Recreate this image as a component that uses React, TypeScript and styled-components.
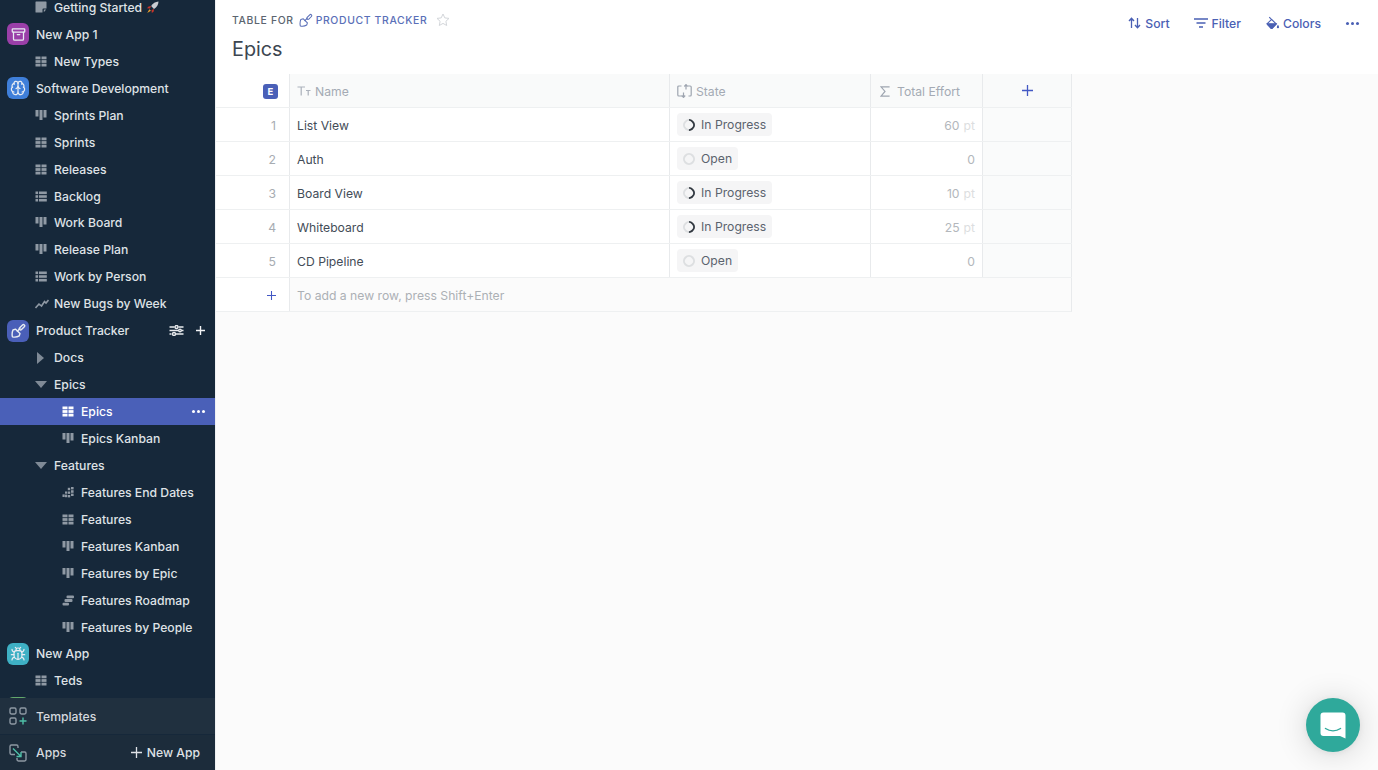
import React from "react";
import styled, { createGlobalStyle } from "styled-components";
import { Archive, Brain, Bug } from "lucide-react";

const GlobalStyle = createGlobalStyle`
    html, body {
        margin: 0;
        padding: 0;
        height: 100%;
        overflow: hidden;
        background: #fff;
        font-family: Inter, "Liberation Sans", sans-serif;
        -webkit-font-smoothing: antialiased;
    }
`;

type ViewKind = "sheet" | "grid" | "kanban" | "list" | "chart" | "dots" | "roadmap";

interface ISideItem {
    label?: string;
    level: 0 | 1 | 2;
    view?: ViewKind;
    caret?: "right" | "down";
    app?: "archive" | "brain" | "trowel" | "bug" | "green";
}

const SIDE_ITEMS: ISideItem[] = [
    { label: "Getting Started", level: 1, view: "sheet" },
    { label: "New App 1", level: 0, app: "archive" },
    { label: "New Types", level: 1, view: "grid" },
    { label: "Software Development", level: 0, app: "brain" },
    { label: "Sprints Plan", level: 1, view: "kanban" },
    { label: "Sprints", level: 1, view: "grid" },
    { label: "Releases", level: 1, view: "grid" },
    { label: "Backlog", level: 1, view: "list" },
    { label: "Work Board", level: 1, view: "kanban" },
    { label: "Release Plan", level: 1, view: "kanban" },
    { label: "Work by Person", level: 1, view: "list" },
    { label: "New Bugs by Week", level: 1, view: "chart" },
    { label: "Product Tracker", level: 0, app: "trowel" },
    { label: "Docs", level: 1, caret: "right" },
    { label: "Epics", level: 1, caret: "down" },
    { label: "Epics", level: 2, view: "grid" },
    { label: "Epics Kanban", level: 2, view: "kanban" },
    { label: "Features", level: 1, caret: "down" },
    { label: "Features End Dates", level: 2, view: "dots" },
    { label: "Features", level: 2, view: "grid" },
    { label: "Features Kanban", level: 2, view: "kanban" },
    { label: "Features by Epic", level: 2, view: "kanban" },
    { label: "Features Roadmap", level: 2, view: "roadmap" },
    { label: "Features by People", level: 2, view: "kanban" },
    { label: "New App", level: 0, app: "bug" },
    { label: "Teds", level: 1, view: "grid" },
    { level: 0, app: "green" },
];

const ROWS = [
    { id: 1, name: "List View", state: "In Progress", effort: "60", unit: true },
    { id: 2, name: "Auth", state: "Open", effort: "0", unit: false },
    { id: 3, name: "Board View", state: "In Progress", effort: "10", unit: true },
    { id: 4, name: "Whiteboard", state: "In Progress", effort: "25", unit: true },
    { id: 5, name: "CD Pipeline", state: "Open", effort: "0", unit: false },
];

const APP_COLORS: Record<string, string> = {
    archive: "#9a3fa8",
    brain: "#3f7fd9",
    trowel: "#4a5fb8",
    bug: "#3eb0c4",
    green: "#63a86c",
};

const ViewIcon = ({ kind }: { kind: ViewKind }) => {
    if (kind === "sheet") {
        return (
            <svg width="12" height="12" viewBox="0 0 12 12" fill="currentColor">
                <path d="M1 0.5h10a.5.5 0 0 1 .5.5v6.500h-3a1 1 0 0 0-1 1v3H1a.5.5 0 0 1-.5-.5V1A.5.5 0 0 1 1 .5z" />
                <path d="M8.800 8.600h2.400l-2.400 2.600z" />
            </svg>
        );
    }
    if (kind === "grid") {
        return (
            <svg width="12" height="11" viewBox="0 0 12 11" fill="currentColor">
                <rect x="0.5" y="0.5" width="5" height="2.8" />
                <rect x="6.5" y="0.5" width="5" height="2.8" />
                <rect x="0.5" y="4.1" width="5" height="2.8" />
                <rect x="6.5" y="4.1" width="5" height="2.8" />
                <rect x="0.5" y="7.700" width="5" height="2.8" />
                <rect x="6.5" y="7.700" width="5" height="2.8" />
            </svg>
        );
    }
    if (kind === "kanban") {
        return (
            <svg width="12" height="11" viewBox="0 0 12 11" fill="currentColor">
                <rect x="0.5" y="0" width="3" height="6.500" />
                <rect x="4.500" y="0" width="3" height="10" />
                <rect x="8.500" y="0" width="3" height="7.500" />
            </svg>
        );
    }
    if (kind === "list") {
        return (
            <svg width="12" height="11" viewBox="0 0 12 11" fill="currentColor">
                <rect x="0.5" y="0.5" width="2.6" height="2.6" />
                <rect x="4" y="0.5" width="7.800" height="2.6" />
                <rect x="0.5" y="4.200" width="2.6" height="2.6" />
                <rect x="4" y="4.200" width="7.800" height="2.6" />
                <rect x="0.5" y="7.900" width="2.6" height="2.6" />
                <rect x="4" y="7.900" width="7.800" height="2.6" />
            </svg>
        );
    }
    if (kind === "chart") {
        return (
            <svg width="14" height="10" viewBox="0 0 14 10" fill="none" stroke="currentColor" strokeWidth="1.600">
                <path d="M0.5 9l3.500-4 2.500 2 3-4.500 1.500 1.500 2.500-3" />
            </svg>
        );
    }
    if (kind === "dots") {
        return (
            <svg width="12" height="11" viewBox="0 0 12 11" fill="currentColor">
                <rect x="9" y="0" width="2.600" height="2.400" />
                <rect x="5.800" y="0.800" width="2.400" height="2.400" />
                <rect x="9" y="3.200" width="2.600" height="2.600" />
                <rect x="3" y="4.500" width="2.200" height="2.200" />
                <rect x="5.800" y="4.500" width="2.400" height="2.400" />
                <rect x="9" y="6.600" width="2.600" height="2.400" />
                <rect x="0.5" y="7.400" width="2.200" height="2.600" />
                <rect x="3" y="7.600" width="2.200" height="2.600" />
                <rect x="5.800" y="8" width="2.400" height="2.400" />
            </svg>
        );
    }
    return (
        <svg width="12" height="11" viewBox="0 0 12 11" fill="currentColor">
            <rect x="4.500" y="0.5" width="7.500" height="2.800" rx="1" />
            <rect x="2.500" y="4.100" width="8" height="2.800" rx="1" />
            <rect x="0.5" y="7.700" width="6.500" height="2.800" rx="1" />
        </svg>
    );
};

const TrowelIcon = ({ size, weight = 1.4 }: { size: number; weight?: number }) => (
    <svg width={size} height={size} viewBox="0 0 16 16" fill="none" stroke="currentColor" strokeWidth={weight} strokeLinejoin="round" strokeLinecap="round">
        <path d="M1.500 14.800c-.5-2.300-.4-5 .6-7.300l2.800-.9 4.700 4.700-.8 2.400c-2 1.300-4.800 1.600-7.300 1.100z" />
        <path d="M6.800 8.800l2.700-2.900" />
        <path d="M9.300 5.100l3-3a1.300 1.300 0 0 1 1.900 1.900l-3 3a1.300 1.300 0 0 1-1.900-1.900z" />
    </svg>
);

const AppGlyph = ({ app }: { app: NonNullable<ISideItem["app"]> }) => {
    if (app === "archive") return <Archive size={15} strokeWidth={2} />;
    if (app === "brain") return <Brain size={16} strokeWidth={1.8} />;
    if (app === "bug") return <Bug size={16} strokeWidth={1.8} />;
    if (app === "trowel") return <TrowelIcon size={15} weight={1.5} />;
    return null;
};

const RocketIcon = () => (
    <svg width="13" height="13" viewBox="0 0 13 13">
        <path d="M12.500.5c-3.200.2-5.600 1.700-7.400 4.600l2.900 2.900c2.900-1.800 4.400-4.200 4.500-7.500z" fill="#c9ccd2" />
        <path d="M5.100 5.100L2.600 5.400 1 7.300l3 .2zM8 8l-.3 2.500-1.900 1.600-.2-3z" fill="#c8342b" />
        <path d="M3.400 8.200L1.200 12l3.700-2.200z" fill="#f2a32b" />
    </svg>
);

const PlusIcon = ({ size, weight = 1.3 }: { size: number; weight?: number }) => (
    <svg width={size} height={size} viewBox="0 0 11 11" fill="none" stroke="#4358c4" strokeWidth={weight}>
        <path d="M5.500 0v11M0 5.500h11" />
    </svg>
);

const SideRowItem = ({ item }: { item: ISideItem }) => {
    const isActive = item.level === 2 && item.label === "Epics";
    const isTracker = item.label === "Product Tracker";

    return (
        <SideRow $active={isActive} $level={item.level}>
            {item.app && (
                <AppBadge $color={APP_COLORS[item.app]}>
                    <AppGlyph app={item.app} />
                </AppBadge>
            )}
            {item.view && (
                <RowIcon $active={isActive}>
                    <ViewIcon kind={item.view} />
                </RowIcon>
            )}
            {item.caret && (
                <RowIcon>
                    <Caret $dir={item.caret} />
                </RowIcon>
            )}
            <SideLabel $active={isActive}>{item.label}</SideLabel>
            {item.label === "Getting Started" && <RocketWrap><RocketIcon /></RocketWrap>}
            {isTracker && (
                <RowActions>
                    <svg width="15" height="11" viewBox="0 0 15 11" fill="none" stroke="#e9ebee" strokeWidth="1.4">
                        <path d="M0.500 2h5M9.500 2h5M0.500 9h2M7 9h7.500" />
                        <circle cx="7.500" cy="2" r="1.500" />
                        <circle cx="5" cy="9" r="1.500" />
                        <path d="M0.500 5.500h9M12.500 5.500h2" />
                        <circle cx="11" cy="5.500" r="1.300" />
                    </svg>
                    <svg width="11" height="11" viewBox="0 0 11 11" stroke="#f2f3f5" strokeWidth="1.4">
                        <path d="M5.500 1v9M1 5.500h9" />
                    </svg>
                </RowActions>
            )}
            {isActive && (
                <RowActions>
                    <MoreDots $color="#fff" />
                </RowActions>
            )}
        </SideRow>
    );
};

const App = () => {
    return (
        <>
            <GlobalStyle />
            <Page>
                <Sidebar>
                    <SideList>
                        {SIDE_ITEMS.map((item, i) => (
                            <SideRowItem key={i} item={item} />
                        ))}
                    </SideList>
                    <TemplatesBar>
                        <FootIcon>
                            <svg width="18" height="18" viewBox="0 0 18 18" fill="none" stroke="#8d98a3" strokeWidth="1.4">
                                <rect x="1" y="1" width="6" height="6" rx="1.400" />
                                <rect x="11" y="1" width="6" height="6" rx="1.400" />
                                <rect x="1" y="11" width="6" height="6" rx="1.400" />
                                <path d="M14 10.500v7M10.500 14h7" stroke="#4fc0a8" />
                            </svg>
                        </FootIcon>
                        <FootLabel>Templates</FootLabel>
                    </TemplatesBar>
                    <AppsBar>
                        <FootIcon>
                            <svg width="18" height="18" viewBox="0 0 18 18" fill="none" stroke="#8d98a3" strokeWidth="1.400">
                                <path d="M6 10.500H2.400A1.400 1.400 0 0 1 1 9.100V2.400A1.400 1.400 0 0 1 2.400 1h5.200A1.400 1.400 0 0 1 9 2.400V4" />
                                <path d="M12 8h3.600A1.400 1.400 0 0 1 17 9.400v6.200a1.400 1.400 0 0 1-1.400 1.400H9.400A1.400 1.400 0 0 1 8 15.600V14" />
                                <path d="M4 4.500l8 8M12 8v4.500H7.500" stroke="#4fc0a8" />
                            </svg>
                        </FootIcon>
                        <FootLabel>Apps</FootLabel>
                        <NewApp>
                            <svg width="11" height="11" viewBox="0 0 11 11" stroke="#dfe2e6" strokeWidth="1.300">
                                <path d="M5.500 0v11M0 5.500h11" />
                            </svg>
                            New App
                        </NewApp>
                    </AppsBar>
                </Sidebar>

                <Main>
                    <Header>
                        <TitleBlock>
                            <Breadcrumb>
                                <span>TABLE FOR</span>
                                <CrumbLink>
                                    <TrowelIcon size={14} weight={1.2} />
                                    PRODUCT TRACKER
                                </CrumbLink>
                                <StarWrap>
                                    <svg width="14" height="14" viewBox="0 0 14 14" fill="none" stroke="#d3d6da" strokeWidth="1">
                                        <path d="M7 1l1.800 3.900 4.200.5-3.100 2.900.8 4.200L7 10.400l-3.700 2.100.8-4.200L1 5.400l4.200-.5z" />
                                    </svg>
                                </StarWrap>
                            </Breadcrumb>
                            <PageTitle>Epics</PageTitle>
                        </TitleBlock>
                        <Toolbar>
                            <ToolButton>
                                <svg width="13" height="12" viewBox="0 0 13 12" fill="none" stroke="currentColor" strokeWidth="1.300">
                                    <path d="M3.500 11V1.500M1 4l2.500-2.800L6 4M9.500 1v9.500M7 8l2.500 2.800L12 8" />
                                </svg>
                                Sort
                            </ToolButton>
                            <ToolButton>
                                <svg width="14" height="10" viewBox="0 0 14 10" stroke="currentColor" strokeWidth="1.300">
                                    <path d="M0 1h14M2.500 5h9M5 9h4" />
                                </svg>
                                Filter
                            </ToolButton>
                            <ColorsButton>
                                <svg width="14" height="14" viewBox="0 0 15 14" fill="none" stroke="currentColor" strokeWidth="1.200">
                                    <path d="M3.500 .8l2.800 2.800" />
                                    <path d="M6 3.200l5 5-4.300 4.200a1 1 0 0 1-1.400 0L1.600 8.700a1 1 0 0 1 0-1.400z" />
                                    <path d="M1.500 7.800h9.300l-4.100 4.600a1 1 0 0 1-1.400 0z" fill="currentColor" />
                                    <path d="M12.800 9c.7 1 1.200 1.800 1.200 2.500a1.200 1.200 0 0 1-2.400 0c0-.7.500-1.500 1.200-2.500z" fill="currentColor" stroke="none" />
                                </svg>
                                Colors
                            </ColorsButton>
                            <MoreDots $color="#4a60b4" />
                        </Toolbar>
                    </Header>

                    <Table>
                        <HeadRow>
                            <NumCell>
                                <KeyBadge>E</KeyBadge>
                            </NumCell>
                            <HeadCell>
                                <svg width="14" height="10" viewBox="0 0 14 10" fill="none" stroke="#abb1bb" strokeWidth="1.200">
                                    <path d="M0.500 1h7.500M4.200 1v8.500M9 4.500h4.500M11.200 4.500v5" />
                                </svg>
                                Name
                            </HeadCell>
                            <HeadCell>
                                <svg width="15" height="14" viewBox="0 0 15 14" fill="none" stroke="#9ea5b0" strokeWidth="1.200">
                                    <path d="M4.500 2H1.800a1 1 0 0 0-1 1v8a1 1 0 0 0 1 1H5M11 2h2.200a1 1 0 0 1 1 1v8a1 1 0 0 1-1 1h-1.700" />
                                    <path d="M9 5.500V1M7.300 2.500L9 .6l1.700 1.900M6.500 8.500V13M4.800 11.500l1.700 1.900 1.700-1.900" />
                                </svg>
                                State
                            </HeadCell>
                            <EffortHead>
                                <svg width="10" height="11" viewBox="0 0 10 11" fill="none" stroke="#9ea5b0" strokeWidth="1.200">
                                    <path d="M9 1.500V.8H1l4 4.600-4 4.800h8v-.8" />
                                </svg>
                                <EffortLabel>Total Effort</EffortLabel>
                            </EffortHead>
                            <AddColumn>
                                <PlusIcon size={11} />
                            </AddColumn>
                        </HeadRow>

                        {ROWS.map((row) => (
                            <BodyRow key={row.id}>
                                <NumCell>
                                    <RowNumber>{row.id}</RowNumber>
                                </NumCell>
                                <NameCell>{row.name}</NameCell>
                                <StateCell>
                                    <StatePill>
                                        <StateIcon $progress={row.state === "In Progress"} />
                                        {row.state}
                                    </StatePill>
                                </StateCell>
                                <EffortCell>
                                    {row.effort}
                                    {row.unit && <Unit>pt</Unit>}
                                </EffortCell>
                                <BlankCell />
                            </BodyRow>
                        ))}

                        <AddRow>
                            <NumCell>
                                <RowNumber>
                                    <PlusIcon size={9} />
                                </RowNumber>
                            </NumCell>
                            <AddHint>To add a new row, press Shift+Enter</AddHint>
                        </AddRow>
                    </Table>

                    <ChatBubble>
                        <svg width="30" height="30" viewBox="0 0 30 30">
                            <path
                                d="M5.500 2.500h19a3 3 0 0 1 3 3v23l-5.500-2.500H5.500a3 3 0 0 1-3-3v-17.500a3 3 0 0 1 3-3z"
                                fill="#fff"
                            />
                            <path d="M7.500 18.500c4.500 3 10.500 3 15 0" fill="none" stroke="#2fa99b" strokeWidth="1.500" strokeLinecap="round" />
                        </svg>
                    </ChatBubble>
                </Main>
            </Page>
        </>
    );
};

export default App;

const Page = styled.div`
    display: flex;
    width: 1378px;
    height: 770px;
    overflow: hidden;
`;

const Sidebar = styled.aside`
    width: 216px;
    box-sizing: border-box;
    border-right: 1px solid #eef0f2;
    flex-shrink: 0;
    height: 100%;
    display: flex;
    flex-direction: column;
    background: #16283a;
`;

const SideList = styled.div`
    flex: 1;
    min-height: 0;
    overflow: hidden;
    & > :first-child {
        margin-top: -6px;
    }
`;

const SideRow = styled.div<{ $active?: boolean; $level: number }>`
    height: 26.94px;
    display: flex;
    align-items: center;
    padding-left: ${({ $level }) => ($level === 0 ? 7 : $level === 1 ? 35 : 62)}px;
    padding-right: 9px;
    background: ${({ $active }) => ($active ? "#4a60b8" : "transparent")};
`;

const AppBadge = styled.div<{ $color: string }>`
    width: 22px;
    height: 22px;
    border-radius: 6px;
    margin-right: 7px;
    flex-shrink: 0;
    display: flex;
    align-items: center;
    justify-content: center;
    color: #e8ecf2;
    background: ${({ $color }) => $color};
`;

const RowIcon = styled.div<{ $active?: boolean }>`
    width: 19px;
    flex-shrink: 0;
    display: flex;
    align-items: center;
    color: ${({ $active }) => ($active ? "#fff" : "#8f99a4")};
`;

const Caret = styled.span<{ $dir: "right" | "down" }>`
    width: 0;
    height: 0;
    ${({ $dir }) =>
        $dir === "right"
            ? `
        margin-left: 2px;
        border-top: 6px solid transparent;
        border-bottom: 6px solid transparent;
        border-left: 7px solid #7f8a96;
    `
            : `
        border-left: 6px solid transparent;
        border-right: 6px solid transparent;
        border-top: 7px solid #7f8a96;
    `}
`;

const SideLabel = styled.span<{ $active?: boolean }>`
    font-size: 12.2px;
    font-weight: 500;
    white-space: nowrap;
    color: ${({ $active }) => ($active ? "#fff" : "#dfe2e6")};
`;

const RocketWrap = styled.span`
    display: flex;
    margin-left: 4px;
`;

const RowActions = styled.div`
    margin-left: auto;
    display: flex;
    align-items: center;
    gap: 11px;
`;

const MoreDots = styled.span<{ $color: string }>`
    display: inline-block;
    width: 3px;
    height: 3px;
    margin: 0 6px;
    border-radius: 50%;
    background: ${({ $color }) => $color};
    box-shadow: 5px 0 0 ${({ $color }) => $color}, -5px 0 0 ${({ $color }) => $color};
`;

const TemplatesBar = styled.div`
    height: 36px;
    flex-shrink: 0;
    display: flex;
    align-items: center;
    padding: 0 15px 0 9px;
    background: #20303f;
    border-bottom: 1px solid #16283a;
`;

const AppsBar = styled(TemplatesBar)`
    height: 35px;
    border-bottom: 0;
    background: #1c2c3b;
`;

const FootIcon = styled.div`
    width: 27px;
    display: flex;
    align-items: center;
`;

const FootLabel = styled.span`
    font-size: 12.2px;
    font-weight: 500;
    color: #d5d9de;
`;

const NewApp = styled.span`
    margin-left: auto;
    display: flex;
    align-items: center;
    gap: 5px;
    font-size: 12.2px;
    font-weight: 500;
    color: #dfe2e6;
`;

const Main = styled.main`
    position: relative;
    flex: 1;
    min-width: 0;
    display: flex;
    flex-direction: column;
    background: #fbfbfb;
`;

const Header = styled.header`
    height: 74px;
    flex-shrink: 0;
    display: flex;
    justify-content: space-between;
    align-items: flex-start;
    padding: 0 18px 0 16px;
    background: #fff;
`;

const TitleBlock = styled.div`
    padding-top: 12px;
`;

const Breadcrumb = styled.div`
    display: flex;
    align-items: center;
    height: 16px;
    font-size: 10.4px;
    font-weight: 500;
    letter-spacing: 0.65px;
    color: #5b6570;
`;

const CrumbLink = styled.span`
    display: flex;
    align-items: center;
    gap: 3px;
    margin-left: 5px;
    color: #5a6fb8;
`;

const StarWrap = styled.span`
    display: flex;
    margin-left: 9px;
`;

const PageTitle = styled.h1`
    margin: 8px 0 0;
    font-size: 19.8px;
    line-height: 26px;
    font-weight: 400;
    color: #3c4651;
`;

const Toolbar = styled.div`
    display: flex;
    align-items: center;
    gap: 24px;
    height: 46px;
`;

const ToolButton = styled.button`
    all: unset;
    display: flex;
    align-items: center;
    gap: 4px;
    font-size: 12.2px;
    font-weight: 500;
    color: #4a60b4;
`;

const ColorsButton = styled(ToolButton)`
    gap: 3px;
    margin-left: 1px;
`;

const Table = styled.div`
    width: 856px;
    display: flex;
    flex-direction: column;
    font-size: 12.2px;
`;

const GridRow = styled.div`
    display: grid;
    grid-template-columns: 74px 380px 201px 112px 89px;
    height: 34px;
    box-sizing: border-box;
    border-bottom: 1px solid #eef0f1;
`;

const HeadRow = styled(GridRow)`
    background: #f9fafa;
`;

const BodyRow = styled(GridRow)`
    background: #fff;
`;

const AddRow = styled(GridRow)`
    grid-template-columns: 74px 1fr;
    border-right: 1px solid #e8eaec;
`;

const Cell = styled.div`
    display: flex;
    align-items: center;
    min-width: 0;
    padding-top: 1px;
    border-right: 1px solid #e8eaec;
`;

const NumCell = styled(Cell)`
    justify-content: flex-end;
    padding-right: 11px;
    color: #a7acb2;
    background: #fff;
`;

const RowNumber = styled.span`
    display: flex;
    margin-right: 2px;
`;

const HeadCell = styled(Cell)`
    gap: 4px;
    padding-left: 7px;
    color: #a4aab4;
    font-weight: 400;
`;

const EffortHead = styled(HeadCell)`
    padding-left: 9px;
`;

const EffortLabel = styled.span`
    margin-left: 3px;
`;

const AddColumn = styled(Cell)`
    justify-content: center;
    padding-top: 0;
`;

const KeyBadge = styled.span`
    width: 15px;
    height: 15px;
    border-radius: 3px;
    display: flex;
    align-items: center;
    justify-content: center;
    font-size: 9.5px;
    font-weight: 700;
    color: #fff;
    background: #4a60b8;
`;

const NameCell = styled(Cell)`
    padding-left: 7px;
    color: #434c57;
`;

const StateCell = styled(Cell)`
    padding-left: 7px;
    padding-top: 0;
`;

const StatePill = styled.span`
    height: 23px;
    display: flex;
    align-items: center;
    gap: 6px;
    padding: 0 6px;
    border-radius: 4px;
    font-size: 12.2px;
    color: #5b636e;
    background: #f5f5f6;
`;

const StateIcon = styled.span<{ $progress: boolean }>`
    width: 12px;
    height: 12px;
    box-sizing: border-box;
    border-radius: 50%;
    border: 2px solid #dddfe1;
    border-top-color: ${({ $progress }) => ($progress ? "#333a42" : "#dddfe1")};
    border-right-color: ${({ $progress }) => ($progress ? "#333a42" : "#dddfe1")};
    transform: rotate(45deg);
`;

const EffortCell = styled(Cell)`
    justify-content: flex-end;
    padding-right: 7px;
    color: #b3b7bc;
`;

const Unit = styled.span`
    margin-left: 4px;
    color: #dcdee0;
`;

const BlankCell = styled(Cell)`
    background: #fafbfb;
`;

const AddHint = styled.div`
    display: flex;
    align-items: center;
    padding: 1px 0 0 7px;
    color: #acb0b5;
`;

const ChatBubble = styled.div`
    position: absolute;
    right: 18px;
    bottom: 18px;
    width: 54px;
    height: 54px;
    border-radius: 50%;
    display: flex;
    align-items: center;
    justify-content: center;
    background: #2fa99b;
    box-shadow: 0 1px 6px rgba(0, 0, 0, 0.06), 0 2px 32px rgba(0, 0, 0, 0.16);
`;
